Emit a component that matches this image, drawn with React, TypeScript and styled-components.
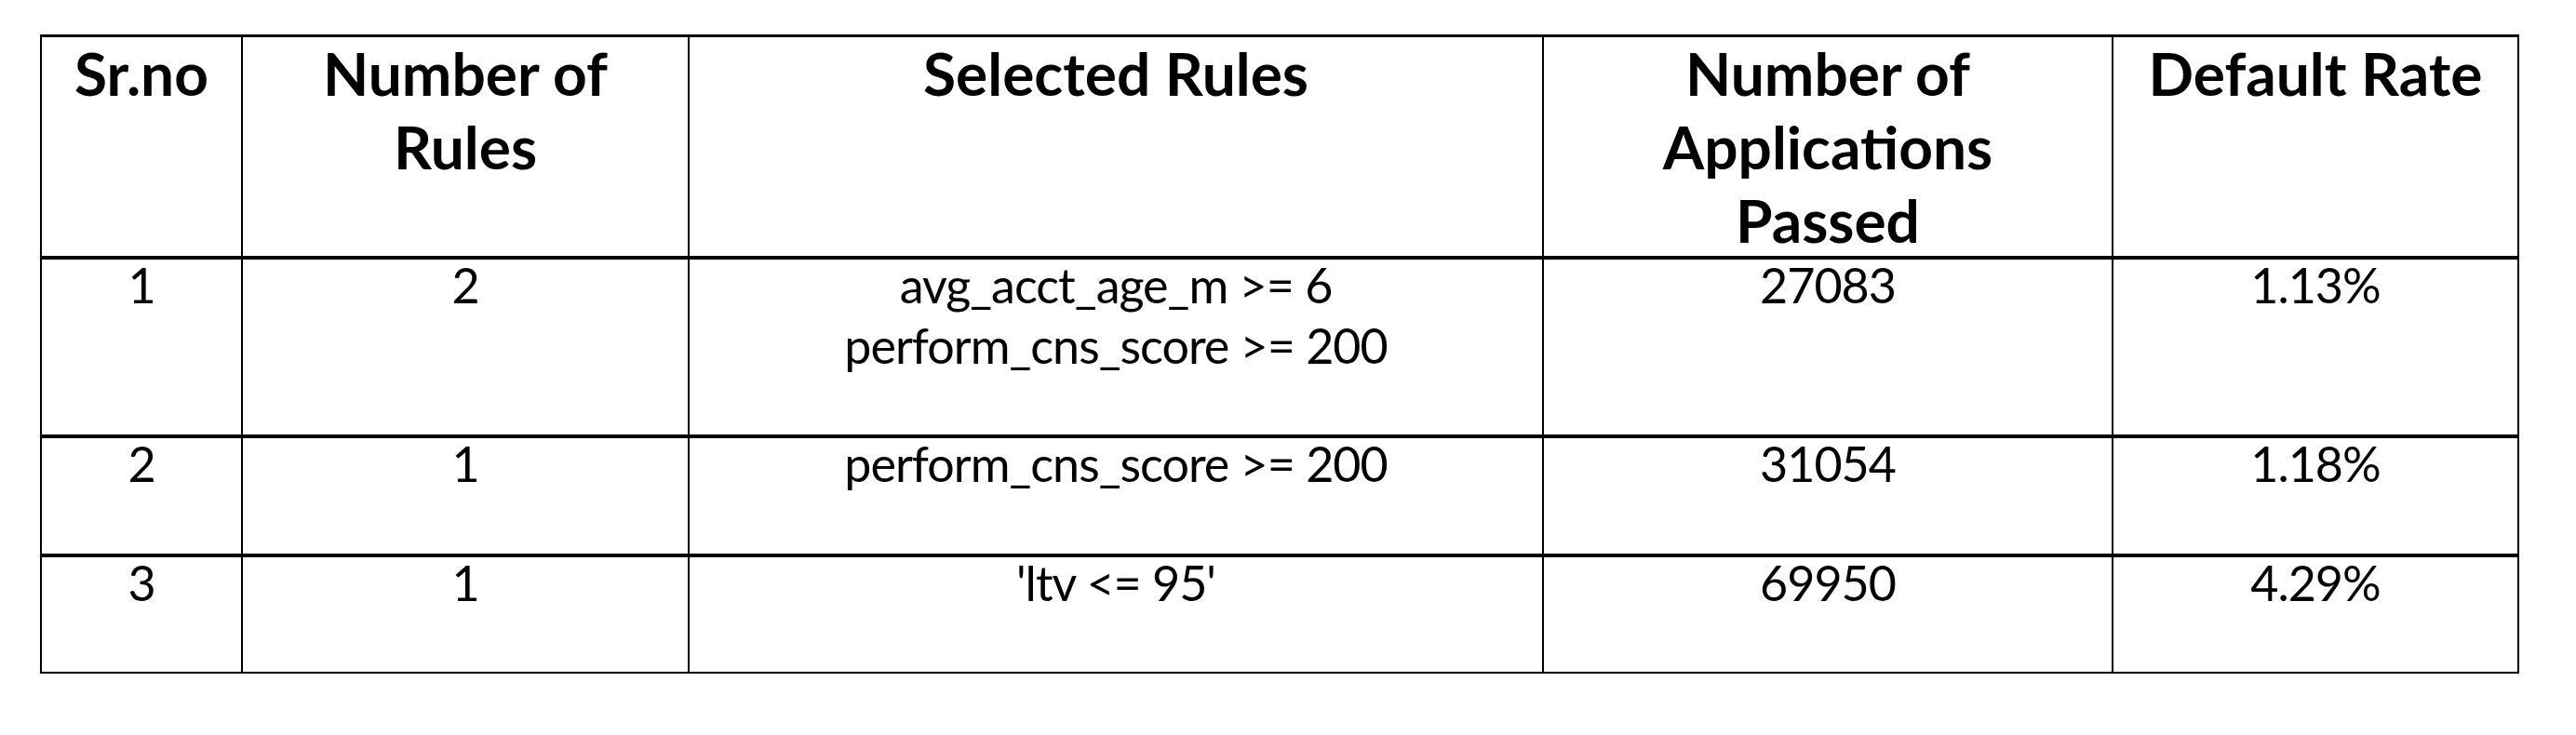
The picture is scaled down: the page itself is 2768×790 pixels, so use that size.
import styled, { createGlobalStyle } from "styled-components";

const GlobalStyle = createGlobalStyle`
  html, body {
    margin: 0;
    padding: 0;
    background: #ffffff;
  }
  body {
    font-family: Lato, "Open Sans", "Noto Sans", sans-serif;
    color: #000000;
  }
`;

type Row = {
  srNo: string;
  ruleCount: string;
  rules: string[];
  passed: string;
  defaultRate: string;
  height: number;
};

const rows: Row[] = [
  {
    srNo: "1",
    ruleCount: "2",
    rules: ["avg_acct_age_m >= 6", "perform_cns_score >= 200"],
    passed: "27083",
    defaultRate: "1.13%",
    height: 192,
  },
  {
    srNo: "2",
    ruleCount: "1",
    rules: ["perform_cns_score >= 200"],
    passed: "31054",
    defaultRate: "1.18%",
    height: 128,
  },
  {
    srNo: "3",
    ruleCount: "1",
    rules: ["'ltv <= 95'"],
    passed: "69950",
    defaultRate: "4.29%",
    height: 125,
  },
];

const headers: string[][] = [
  ["Sr.no"],
  ["Number of", "Rules"],
  ["Selected Rules"],
  ["Number of", "Applications", "Passed"],
  ["Default Rate"],
];

const Page = styled.div`
  padding: 37px 0 40px 43px;
`;

const Table = styled.div`
  display: grid;
  grid-template-columns: 216px 480px 918px 612px 436px;
  width: 2664px;
  box-sizing: border-box;
  border-top: 3px solid #000;
  border-left: 2px solid #000;
`;

const HeadCell = styled.div`
  box-sizing: border-box;
  height: 239px;
  border-right: 2px solid #000;
  border-bottom: 4px solid #000;
  text-align: center;
  font-weight: 700;
  font-size: 64px;
  line-height: 77px;
`;

const HeadLine = styled.div`
  & + & {
    margin-top: 2px;
  }
`;

const Cell = styled.div<{ $height: number; $last: boolean }>`
  box-sizing: border-box;
  height: ${(p) => p.$height}px;
  border-right: 2px solid #000;
  border-bottom: ${(p) => (p.$last ? 2 : 4)}px solid #000;
  text-align: center;
  font-weight: 400;
  font-size: 52px;
  line-height: 55px;
  letter-spacing: -1px;
`;

const CellLine = styled.div`
  & + & {
    margin-top: 10px;
  }
`;

const App = () => {
  return (
    <Page>
      <GlobalStyle />
      <Table>
        {headers.map((h, i) => (
          <HeadCell key={`h-${i}`}>
            {h.map((line, j) => (
              <HeadLine key={j}>{line}</HeadLine>
            ))}
          </HeadCell>
        ))}
        {rows.map((row, r) => {
          const last = r === rows.length - 1;
          const values = [
            [row.srNo],
            [row.ruleCount],
            row.rules,
            [row.passed],
            [row.defaultRate],
          ];
          return values.map((v, c) => (
            <Cell key={`${r}-${c}`} $height={row.height} $last={last}>
              {v.map((line, j) => (
                <CellLine key={j}>{line}</CellLine>
              ))}
            </Cell>
          ));
        })}
      </Table>
    </Page>
  );
};

export default App;
